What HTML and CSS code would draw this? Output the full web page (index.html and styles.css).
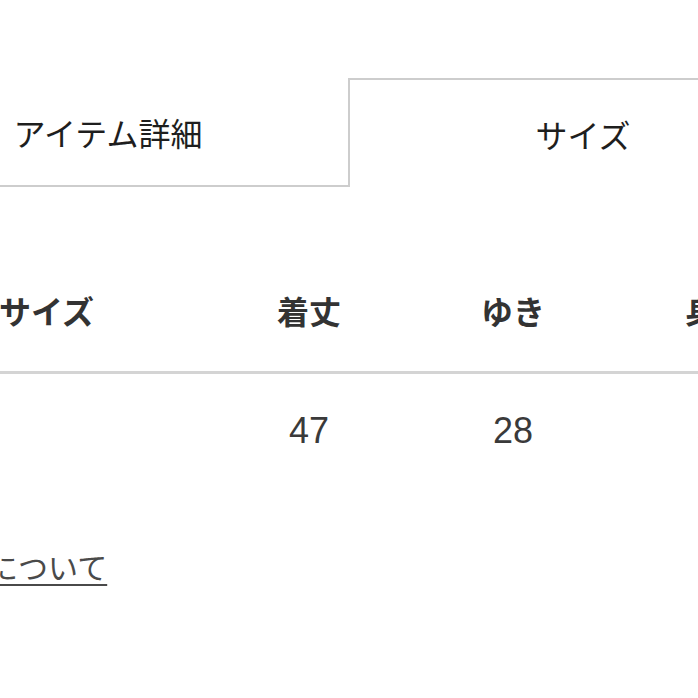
FILE: index.html
```html
<!DOCTYPE html>
<html lang="ja">
<head>
<meta charset="utf-8">
<link rel="stylesheet" href="styles.css">
</head>
<body>
<div class="page">
  <div class="tabs">
    <div class="tab tab-inactive">アイテム詳細</div>
    <div class="tab tab-active">サイズ</div>
  </div>
  <div class="size-table">
    <div class="row head">
      <div class="cell first">サイズ</div>
      <div class="cell">着丈</div>
      <div class="cell">ゆき</div>
      <div class="cell">身幅</div>
    </div>
    <div class="row body-row">
      <div class="cell first"></div>
      <div class="cell num">47</div>
      <div class="cell num">28</div>
      <div class="cell num">54</div>
    </div>
  </div>
  <div class="note"><a class="note-link" href="#">サイズについて</a></div>
</div>
</body>
</html>
```

FILE: styles.css
```css
html, body {
  margin: 0;
  padding: 0;
  background: #fff;
  overflow: hidden;
}
body {
  width: 698px;
  height: 698px;
  font-family: "Noto Sans CJK JP", "Noto Sans", sans-serif;
  color: #222;
}
.page {
  margin-left: -122px;
  width: 940px;
  padding-top: 78px;
}
.tabs {
  display: flex;
}
.tab {
  width: 470px;
  height: 109px;
  box-sizing: border-box;
  display: flex;
  align-items: center;
  justify-content: center;
  font-size: 32px;
  color: #1e1e1e;
}
.tab-inactive {
  border-bottom: 2px solid #cdcdcd;
  padding-right: 10px;
  padding-top: 1px;
}
.tab-active {
  border: 2px solid #cdcdcd;
  border-bottom: none;
}
.size-table {
  margin-top: 101px;
}
.row {
  display: grid;
  grid-template-columns: 329px 204px 204px 204px;
  line-height: 48px;
}
.cell {
  text-align: center;
}
.cell.first {
  text-align: left;
  padding-left: 121px;
}
.head {
  font-size: 32px;
  font-weight: 700;
  color: #333;
  padding-bottom: 35px;
  border-bottom: 3px solid #d4d4d4;
}
.head .cell {
  position: relative;
  top: -2px;
}
.body-row {
  padding-top: 33px;
  color: #3a3a3a;
}
.num {
  font-family: "Liberation Sans", Arial, sans-serif;
  font-size: 36px;
}
.note {
  margin-top: 87px;
  padding-left: 21px;
  font-size: 30px;
  line-height: 48px;
}
.note-link {
  color: #4a4a4a;
  text-decoration: underline;
  text-underline-offset: 5px;
  text-decoration-thickness: 2px;
}
```
